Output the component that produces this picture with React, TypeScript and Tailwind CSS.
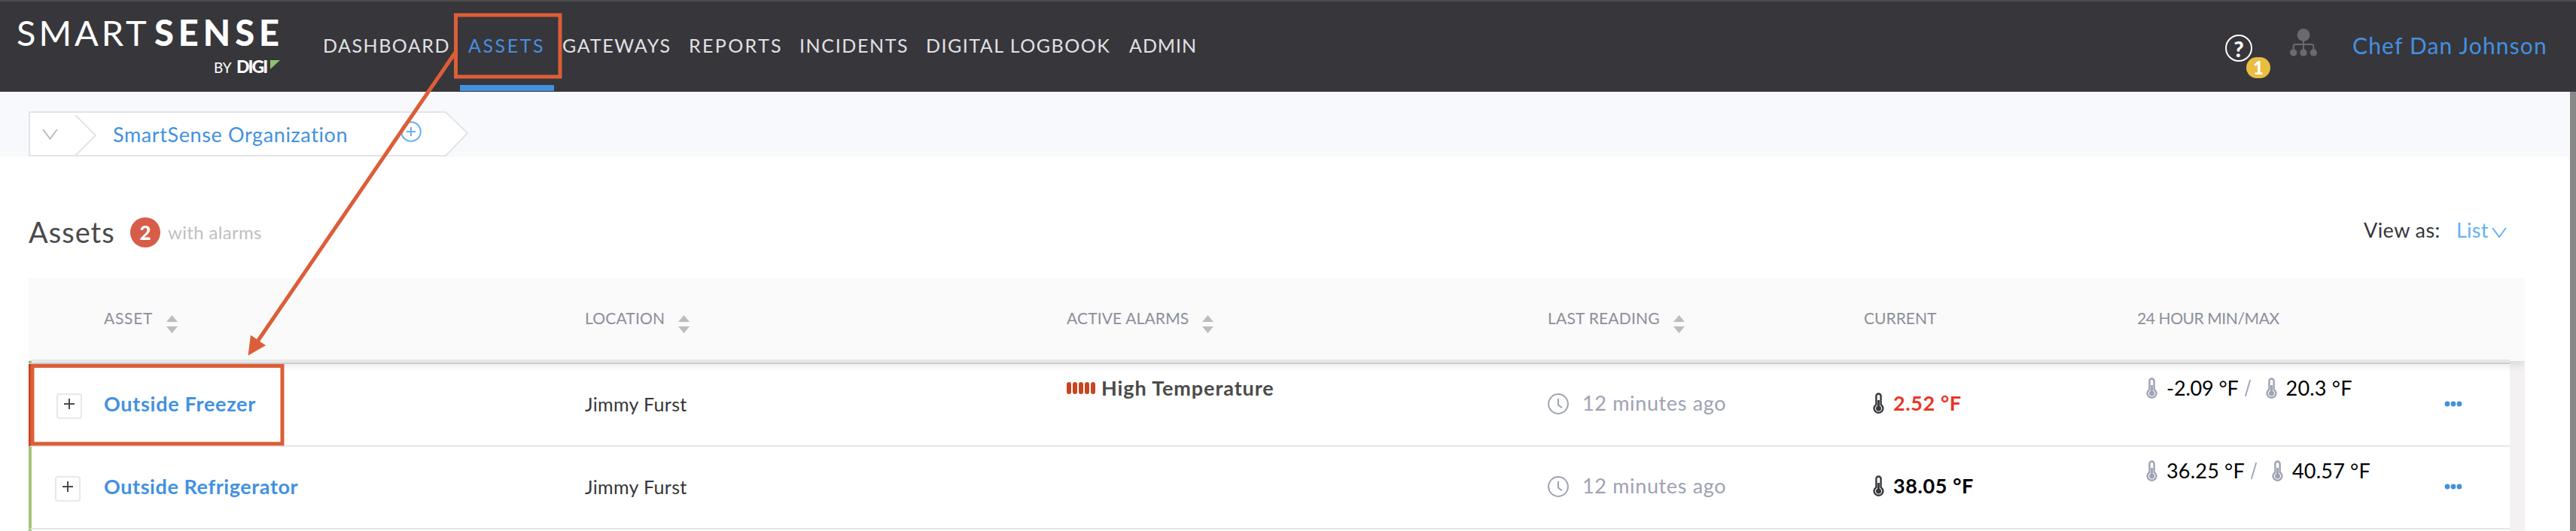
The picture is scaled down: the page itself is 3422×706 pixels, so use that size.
import clsx from 'clsx'

type Asset = {
  name: string
  nameClass: string
  location: string
  alarm?: string
  lastReading: string
  current: string
  min: string
  max: string
  inAlarm: boolean
}

const assets: Asset[] = [
  {
    name: 'Outside Freezer',
    nameClass: 'tracking-[0.71px]',
    location: 'Jimmy Furst',
    alarm: 'High Temperature',
    lastReading: '12 minutes ago',
    current: '2.52 °F',
    min: '-2.09 °F',
    max: '20.3 °F',
    inAlarm: true,
  },
  {
    name: 'Outside Refrigerator',
    nameClass: 'tracking-[0.58px]',
    location: 'Jimmy Furst',
    lastReading: '12 minutes ago',
    current: '38.05 °F',
    min: '36.25 °F',
    max: '40.57 °F',
    inAlarm: false,
  },
]

const navItems = [
  { label: 'DASHBOARD', className: 'w-[193px] tracking-[1.51px]' },
  { label: 'ASSETS', className: 'w-[125px] tracking-[2.56px]', active: true },
  { label: 'GATEWAYS', className: 'w-[168px] tracking-[1.71px]' },
  { label: 'REPORTS', className: 'w-[147px] tracking-[2.35px]' },
  { label: 'INCIDENTS', className: 'w-[168px] tracking-[1.62px]' },
  { label: 'DIGITAL LOGBOOK', className: 'w-[270px] tracking-[1.51px]' },
  { label: 'ADMIN', className: 'tracking-[0.96px]' },
]

const columns = [
  { label: 'ASSET', className: 'tracking-[0.72px]', sortable: true },
  { label: 'LOCATION', className: 'tracking-[0.18px]', sortable: true },
  { label: 'ACTIVE ALARMS', className: 'tracking-[0.15px]', sortable: true },
  { label: 'LAST READING', className: 'tracking-[0.22px]', sortable: true },
  { label: 'CURRENT', className: '', sortable: false },
  { label: '24 HOUR MIN/MAX', className: 'tracking-[-0.41px]', sortable: false },
]

const gridCols = 'grid grid-cols-[96px_639px_640px_639px_420px_363px_408px_1fr]'

function Thermometer({ className }: { className?: string }) {
  return (
    <svg viewBox="0 0 15 29" className={clsx('h-[29px] w-[15px] shrink-0', className)} fill="none" stroke="currentColor">
      <path d="M4.4 15.9V4.6a3.1 3.1 0 0 1 6.2 0V15.9a5.9 5.9 0 1 1-6.2 0Z" strokeWidth="2.4" />
      <path d="M7.5 10v10" strokeWidth="2.8" />
      <circle cx="7.5" cy="20.9" r="3.5" fill="currentColor" stroke="none" />
    </svg>
  )
}

function Clock() {
  return (
    <svg viewBox="0 0 28 28" className="h-7 w-7 shrink-0" fill="none" stroke="currentColor" strokeWidth="2">
      <circle cx="14" cy="14" r="12.9" />
      <path d="M14 7v8.5l5 3.6" />
    </svg>
  )
}

function SortArrows() {
  return (
    <svg viewBox="0 0 15 24" className="mt-4 h-6 w-[15px]" fill="#bdbdbd">
      <path d="M7.5 0L15 9H0ZM7.5 24L0 15H15Z" />
    </svg>
  )
}

function Logo() {
  return (
    <div className="w-[429px] pt-4 pl-[22px] text-white">
      <div className="flex h-[50px] items-center text-[47px] leading-[50px]">
        <span className="w-[183px] tracking-[3.9px]">SMART</span>
        <span className="font-black tracking-[5.97px]">SENSE</span>
      </div>
      <div className="flex h-10 items-center pl-[262px]">
        <span className="mt-1 w-[30px] text-[19px]">BY</span>
        <span className="w-[45px] text-[23px] font-black tracking-[-2px]">DIGI</span>
        <svg viewBox="0 0 13 12" className="-mt-1 h-3 w-[13px]">
          <path d="M0 0H13L0 12Z" fill="#8fc46c" />
        </svg>
      </div>
    </div>
  )
}

function Header() {
  return (
    <header className="flex h-[122px] border-t-2 border-[#4c4c4c] bg-[#37363b]">
      <Logo />
      <nav className="flex flex-1 text-[25px] text-[#e1e1e4]">
        {navItems.map((item) => (
          <a
            key={item.label}
            className={clsx('relative flex h-[117px] items-center whitespace-nowrap', item.className, item.active && 'text-[#4391e0]')}
          >
            {item.label}
            {item.active && <span className="absolute top-[111px] left-[-11px] h-2 w-[125px] bg-[#4391e0]" />}
          </a>
        ))}
      </nav>
      <div className="flex w-[466px]">
        <div className="relative mt-11 h-9 w-[86px]">
          <span className="flex h-9 w-9 items-center justify-center rounded-full border-[2.5px] border-white text-[29px] leading-none font-black text-white">
            ?
          </span>
          <span className="absolute top-[30px] left-7 flex h-7 w-8 items-center justify-center rounded-full bg-[#e8bd40] text-[24px] leading-none font-black text-white">
            1
          </span>
        </div>
        <svg viewBox="0 0 36 37" className="mt-9 h-[37px] w-9" fill="#6b6b6e">
          <circle cx="18" cy="8.5" r="8.4" />
          <circle cx="4.7" cy="32" r="4.7" />
          <circle cx="18" cy="32" r="4.7" />
          <circle cx="31.3" cy="32" r="4.7" />
          <path d="M4.7 30V23.5a2.5 2.5 0 0 1 2.5-2.5H28.8a2.5 2.5 0 0 1 2.5 2.5V30M18 14V30" fill="none" stroke="#6b6b6e" strokeWidth="2" />
        </svg>
        <a className="mt-10 ml-[47px] text-[30px] leading-9 tracking-[1.16px] whitespace-nowrap text-[#4391e0]">Chef Dan Johnson</a>
      </div>
    </header>
  )
}

function Breadcrumb() {
  return (
    <div className="h-[86px] bg-[#f8f9fd] pt-[26px] pl-[38px]">
      <div className="relative flex h-[60px] w-[585px]">
        <svg viewBox="0 0 585 60" className="absolute inset-0" fill="none" stroke="#e3e4e7" strokeWidth="2">
          <path d="M1 1H554L583 29L554 59H1Z" fill="#fff" />
          <path d="M62 5L89 32L62 59" />
          <path d="M19 24L28.5 36.5L38 24" stroke="#bdbdbd" />
        </svg>
        <span className="relative ml-[112px] w-[382px] text-[27px] leading-[62px] tracking-[0.61px] whitespace-nowrap text-[#4391e0]">
          SmartSense Organization
        </span>
        <svg viewBox="0 0 28 28" className="relative mt-[13px] h-7 w-7" fill="none" stroke="#64b1f5" strokeWidth="2">
          <circle cx="14" cy="14" r="12.8" />
          <path d="M14 8v12M8 14h12" />
        </svg>
      </div>
    </div>
  )
}

function TitleBar() {
  return (
    <div className="flex h-[162px] items-start pt-[76px] pl-[38px]">
      <h1 className="w-[135px] text-[38px] leading-[48px] tracking-[1px] text-[#4a4a4a]">Assets</h1>
      <span className="mt-[5px] flex h-10 w-10 items-center justify-center rounded-full bg-[#d85d48] text-[26px] leading-none font-black text-white">
        2
      </span>
      <span className="ml-[10px] flex-1 text-[24px] leading-[50px] tracking-[0.33px] text-[#bfbfbf]">with alarms</span>
      <span className="w-[123px] text-[27px] leading-[44px] tracking-[0.43px] text-[#37363b]">View as:</span>
      <a className="flex w-[151px] items-start text-[27px] leading-[44px] tracking-[0.2px] text-[#64b1f5]">
        List
        <svg viewBox="0 0 20 14" className="mt-[18px] ml-1 h-[14px] w-5" fill="none" stroke="currentColor" strokeWidth="2">
          <path d="M1 1L10 13L19 1" />
        </svg>
      </a>
    </div>
  )
}

function AssetRow({ asset }: { asset: Asset }) {
  return (
    <div
      className={clsx(
        gridCols,
        'h-[110px] items-center border-b-2 border-l-4 border-b-[#e6e6e6] text-[27px] whitespace-nowrap',
        asset.inAlarm ? 'border-l-[#c9401f]' : 'border-l-[#a3c477]',
      )}
    >
      <button className={clsx('mt-1 flex h-[34px] w-[34px] justify-center rounded border-2 border-[#e8e8e8] pt-[5px]', asset.inAlarm ? 'ml-[33px]' : 'ml-[31px]')}>
        <svg viewBox="0 0 14 14" className="h-[14px] w-[14px]" stroke="#4a4a4a" strokeWidth="2">
          <path d="M7 0v14M0 7h14" />
        </svg>
      </button>
      <a className={clsx('pb-px font-bold text-[#4391e0]', asset.nameClass)}>{asset.name}</a>
      <span className="pb-px text-[25px] tracking-[0.35px] text-[#37363b]">{asset.location}</span>
      <div className="flex h-16 items-center self-start">
        {asset.alarm && (
          <>
            <div className="flex w-[46px] gap-[1.5px]">
              {[1, 2, 3, 4, 5].map((n) => (
                <span key={n} className="h-4 w-[6.4px] rounded-sm bg-[#cb4420]" />
              ))}
            </div>
            <span className="font-bold tracking-[0.9px] text-[#4a4a4a]">{asset.alarm}</span>
          </>
        )}
      </div>
      <div className="flex items-center gap-[18px] pb-[3px] text-[#9ea2b3]">
        <Clock />
        <span className="tracking-[0.65px]">{asset.lastReading}</span>
      </div>
      <div className="flex items-center gap-3 pb-[3px] pl-3 text-[#37363b]">
        <Thermometer />
        <span className={clsx('font-bold tracking-[0.6px]', asset.inAlarm ? 'text-[#ea3527]' : 'text-black')}>{asset.current}</span>
      </div>
      <div className="flex h-16 items-center self-start pl-3 text-[#9ea2b3]">
        <Thermometer className="mr-3" />
        <span className={clsx('text-black', asset.inAlarm ? 'tracking-[-0.15px]' : 'tracking-[0.2px]')}>{asset.min}</span>
        <svg viewBox="0 0 8 28" className="mr-5 ml-2 h-7 w-2" stroke="currentColor" strokeWidth="1.8">
          <path d="M7.2 3L.8 25" />
        </svg>
        <Thermometer className="mr-3" />
        <span className="tracking-[0.2px] text-black">{asset.max}</span>
      </div>
      <svg viewBox="0 0 24 8" className="mb-[3px] h-2 w-6" fill="#4391e0">
        <circle cx="4" cy="4" r="3.4" />
        <circle cx="12" cy="4" r="3.4" />
        <circle cx="20" cy="4" r="3.4" />
      </svg>
    </div>
  )
}

function AssetTable() {
  return (
    <div className="ml-[38px] w-[3316px]">
      <div className="relative h-[110px] bg-[#fafafa] shadow-[0_4px_12px_rgba(0,0,0,0.12)] [clip-path:inset(0_0_-20px_0)]">
        <div className={clsx(gridCols, 'h-[110px] w-[3296px] items-center border-b-2 border-l-4 border-b-[#e6e6e6] border-l-transparent text-[21px] whitespace-nowrap text-[#8c8f9a]')}>
          <span />
          {columns.map((column) => (
            <div key={column.label} className="flex h-6 items-center gap-[18px] pb-[3px]">
              <span className={column.className}>{column.label}</span>
              {column.sortable && <SortArrows />}
            </div>
          ))}
        </div>
      </div>
      <div className="flex h-[226px]">
        <div className="w-[3296px]">
          <div className="h-1 border-b-2 border-l-4 border-b-[#dadada] border-l-[#a3c477]" />
          {assets.map((asset) => (
            <AssetRow key={asset.name} asset={asset} />
          ))}
          <div className="h-[2px] border-l-4 border-l-[#a3c477]" />
        </div>
        <div className="w-5 bg-[#f3f1f2]" />
      </div>
    </div>
  )
}

// Highlight boxes and the arrow that joins them, drawn over the page
function Callouts() {
  return (
    <svg viewBox="0 0 3422 706" className="pointer-events-none absolute inset-0 h-[706px] w-[3422px]" fill="none" stroke="#dc5e38" strokeWidth="5">
      <rect x="605.5" y="20" width="138.5" height="82" />
      <rect x="43" y="486.5" width="332" height="103.5" />
      <path d="M606 68L342 454" />
      <path d="M329.5 472.7L333 445.5L353 459.3Z" fill="#dc5e38" stroke="none" />
    </svg>
  )
}

export default function App() {
  return (
    <div className="relative h-[706px] w-[3422px] overflow-hidden bg-white font-[Lato,sans-serif]">
      <Header />
      <div className="flex h-[584px]">
        <main className="w-[3414px] bg-[#f8f9fd]">
          <Breadcrumb />
          <div className="h-[498px] rounded-tr-[8px] bg-white">
            <TitleBar />
            <AssetTable />
          </div>
        </main>
        <div className="w-2 bg-[#888888]" />
      </div>
      <Callouts />
    </div>
  )
}
